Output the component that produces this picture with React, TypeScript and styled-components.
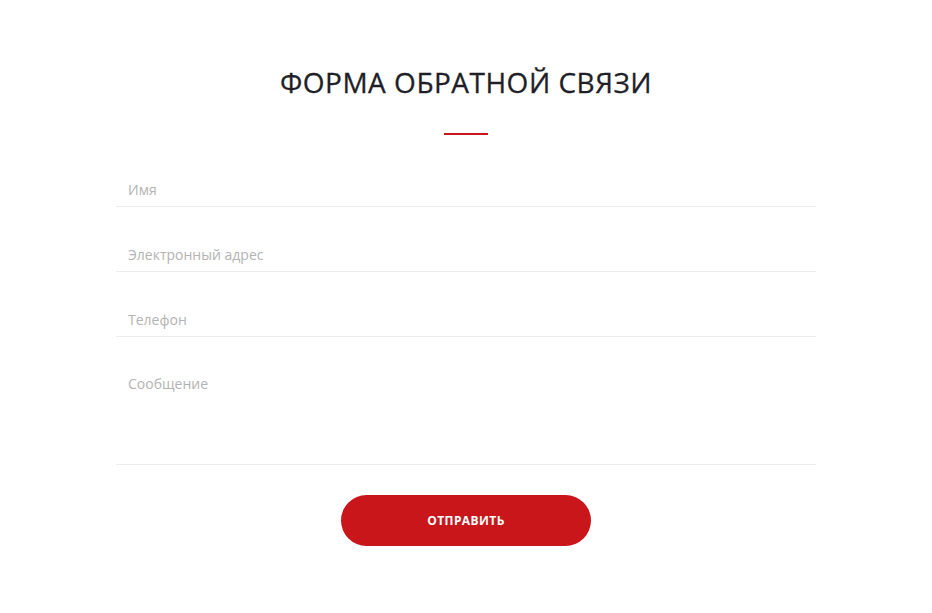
import React from "react";
import styled, { createGlobalStyle } from "styled-components";

const Global = createGlobalStyle`
  html, body { margin: 0; padding: 0; background: #fff; }
  body { font-family: "Open Sans", "Liberation Sans", sans-serif; }
  * { box-sizing: border-box; }
`;

const Section = styled.section`
  width: 700px;
  margin: 0 auto;
  padding-top: 62px;
  display: flex;
  flex-direction: column;
  align-items: center;
`;

const Title = styled.h2`
  margin: 0;
  font-size: 28px;
  line-height: 40px;
  font-weight: 400;
  color: #1f1f28;
  letter-spacing: 0.5px;
  text-transform: uppercase;
  -webkit-text-stroke: 0.3px #1f1f28;
`;

const Divider = styled.div`
  width: 44px;
  height: 2px;
  background: #c8161a;
  margin-top: 31px;
  margin-bottom: 27px;
`;

const Form = styled.form`
  width: 100%;
  display: flex;
  flex-direction: column;
  align-items: center;
  gap: 20px;
`;

const Input = styled.input`
  width: 100%;
  height: 45px;
  border: none;
  border-bottom: 1px solid #ececec;
  padding: 17px 12px 7px;
  font-family: "Open Sans", "Liberation Sans", sans-serif;
  font-size: 14px;
  line-height: 20px;
  color: #333;
  outline: none;
  background: transparent;
  &::placeholder { color: #b3b3b3; }
`;

const TextArea = styled.textarea`
  width: 100%;
  height: 108px;
  border: none;
  border-bottom: 1px solid #ececec;
  padding: 17px 12px 7px;
  font-family: "Open Sans", "Liberation Sans", sans-serif;
  font-size: 14px;
  line-height: 20px;
  color: #333;
  outline: none;
  resize: none;
  background: transparent;
  display: block;
  &::placeholder { color: #b3b3b3; }
`;

const Button = styled.button`
  margin-top: 10px;
  width: 250px;
  height: 51px;
  border: none;
  border-radius: 26px;
  background: #c8161a;
  color: #fff;
  font-family: "Open Sans", "Liberation Sans", sans-serif;
  font-weight: 700;
  font-size: 12px;
  letter-spacing: 0.4px;
  text-transform: uppercase;
  cursor: pointer;
`;

export default function App() {
  return (
    <>
      <Global />
      <Section>
        <Title>Форма обратной связи</Title>
        <Divider />
        <Form onSubmit={(e) => e.preventDefault()}>
          <Input placeholder="Имя" />
          <Input placeholder="Электронный адрес" />
          <Input placeholder="Телефон" />
          <TextArea placeholder="Сообщение" />
          <Button type="submit">Отправить</Button>
        </Form>
      </Section>
    </>
  );
}
